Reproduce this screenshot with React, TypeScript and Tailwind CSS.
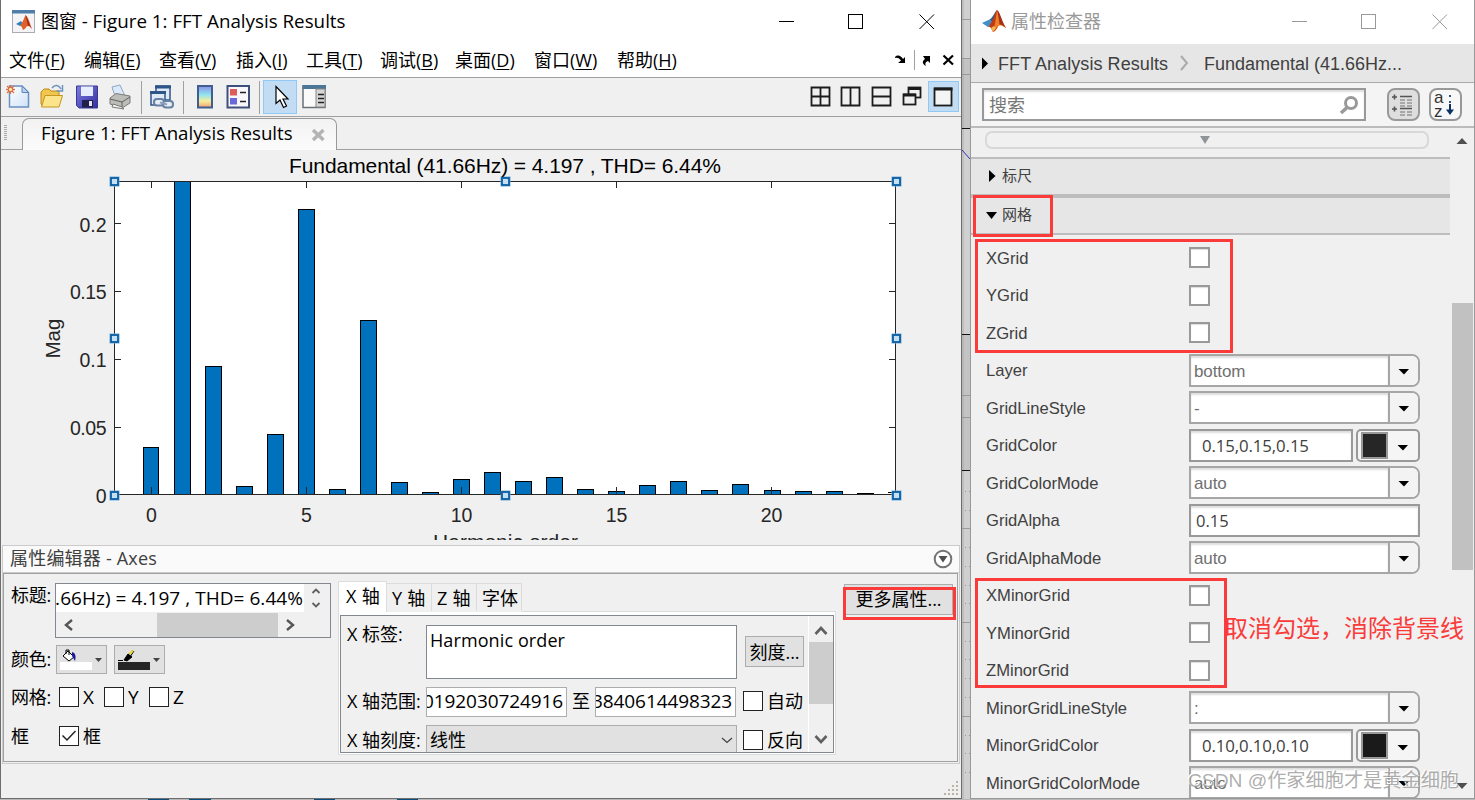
import React from 'react';

const bars = [
  [0, 447], [1, 181], [2, 366], [3, 486], [4, 434], [5, 209], [6, 489], [7, 320], [8, 482],
  [9, 492], [10, 479], [11, 472], [12, 481], [13, 477], [14, 489], [15, 491], [16, 485],
  [17, 481], [18, 490], [19, 484], [20, 490], [21, 491], [22, 491], [23, 493],
];

const menus = [
  { label: '文件', key: 'F', width: 'w-[75px]' },
  { label: '编辑', key: 'E', width: 'w-[75px]' },
  { label: '查看', key: 'V', width: 'w-[77px]' },
  { label: '插入', key: 'I', width: 'w-[70px]' },
  { label: '工具', key: 'T', width: 'w-[74px]' },
  { label: '调试', key: 'B', width: 'w-[75px]' },
  { label: '桌面', key: 'D', width: 'w-[79px]' },
  { label: '窗口', key: 'W', width: 'w-[83px]' },
  { label: '帮助', key: 'H', width: 'w-[70px]' },
];

const properties = [
  { name: 'XGrid', kind: 'check' },
  { name: 'YGrid', kind: 'check' },
  { name: 'ZGrid', kind: 'check' },
  { name: 'Layer', kind: 'select', value: 'bottom' },
  { name: 'GridLineStyle', kind: 'select', value: '-' },
  { name: 'GridColor', kind: 'color', value: '0.15,0.15,0.15' },
  { name: 'GridColorMode', kind: 'select', value: 'auto' },
  { name: 'GridAlpha', kind: 'text', value: '0.15' },
  { name: 'GridAlphaMode', kind: 'select', value: 'auto' },
  { name: 'XMinorGrid', kind: 'check' },
  { name: 'YMinorGrid', kind: 'check' },
  { name: 'ZMinorGrid', kind: 'check' },
  { name: 'MinorGridLineStyle', kind: 'select', value: ':' },
  { name: 'MinorGridColor', kind: 'color', value: '0.10,0.10,0.10' },
  { name: 'MinorGridColorMode', kind: 'select', value: 'auto' },
];

const MatlabLogo = () => (
  <svg width="24" height="24" viewBox="0 0 24 24" className="block shrink-0">
    <path d="M0 14 L7.500 10.500 L11 14 L6 18 Z" fill="#3f8fc9" />
    <path d="M7.500 10.500 C10 10 12 4 15 1 L11 14 Z" fill="#2b5f86" />
    <path d="M15 1 C12 5 12 11 6 18 C9 17 9.500 21 11 23 C15 22 16 16 18 15 Z" fill="#c03a16" />
    <path d="M15 1 C18 3 20 13 24 19 C20 16 17 14 11 23 C13 17 14 8 15 1 Z" fill="#ee8128" />
    <path d="M15 1 C18 3 20 13 24 19 C20 16 19 15 17.500 15.500 C17 10 16 5 15 1 Z" fill="#a5301a" />
    <path d="M9 19 L12 17 L14 19 L11 23 Z" fill="#f6b64f" />
  </svg>
);

const WindowButtons = ({ color }: { color: string }) => (
  <svg width="156" height="16" fill="none" stroke={color} className="block shrink-0">
    <path d="M0 7.500 H15" shapeRendering="crispEdges" />
    <rect x="69.500" y="0.500" width="14" height="14" shapeRendering="crispEdges" />
    <path d="M140.500 0.500 L155 15 M155 0.500 L140.500 15" />
  </svg>
);

const Caret = () => (
  <svg width="12" height="7" className="block">
    <path d="M0.500 1 H11 L6 6.500 Z" fill="#000" />
  </svg>
);

const Check = ({ checked = false }: { checked?: boolean }) => (
  <span className="flex h-5 w-5 shrink-0 items-center justify-center border border-[#222] bg-white">
    {checked && (
      <svg width="16" height="14" fill="none" stroke="#222" strokeWidth="1.5">
        <path d="M1.500 6.500 L6 11 L14.500 2" />
      </svg>
    )}
  </span>
);

const TitleBar = () => (
  <div className="flex h-[44px] items-center bg-white pl-[11px]">
    <svg width="24" height="24" className="block shrink-0">
      <rect x="0.500" y="0.500" width="22" height="22" fill="#f4f4f6" stroke="#a9adb3" />
      <rect x="0" y="0" width="23" height="3.500" fill="#4f7fa8" />
      <path d="M4 14 L9 11 L11 14 L8 16 Z" fill="#2f7fc0" />
      <path d="M13.500 5 C12 8 11 12 8 16 C10 16 10 18 11 20 C14 19 14 16 16 16 C18 16 19 18 20 19 C18 14 17 8 13.500 5 Z" fill="#e0612a" />
      <path d="M13.500 5 C16 8 17 14 20 19 C18 16 17 15 16 16 Z" fill="#9d2b18" />
    </svg>
    <span className="ml-[5px] w-[738px] pb-[2px] text-[18px] leading-6 whitespace-nowrap">
      图窗 <span className="text-[18.800px]">- Figure 1: FFT Analysis Results</span>
    </span>
    <WindowButtons color="#000" />
  </div>
);

const MenuBar = () => (
  <div className="flex h-[34px] items-center border-b border-[#a0a0a0] bg-white pb-[2px] pl-[8px] text-[18px] leading-6">
    {menus.map(menu => (
      <span key={menu.key} className={`${menu.width} shrink-0 whitespace-nowrap`}>
        {menu.label}(<span className="underline decoration-1 underline-offset-2">{menu.key}</span>)
      </span>
    ))}
    <svg width="64" height="22" className="mt-px ml-[205px] block shrink-0">
      <path d="M3 8 C6 5 9 7 11 10 L13 8 V14 H6 L9 11.500 C7 9 5 8.500 3 9 Z" fill="#000" />
      <path d="M22.500 1 V21" stroke="#a0a0a0" />
      <path d="M31 7 H38 V14 L36 12 C33 13 33 15 34 17 C30 15 30 12 33 10 Z" fill="#000" />
      <path d="M51.500 6.500 L61 15.500 M61 6.500 L51.500 15.500" stroke="#000" strokeWidth="2.2" />
    </svg>
  </div>
);

const Toolbar = () => (
  <div className="flex h-[39px] items-center border-b border-[#a0a0a0] bg-[#f0f0f0] pl-[5px]">
    <svg width="324" height="34" className="block shrink-0">
      <defs>
        <linearGradient id="page" x2="1" y2="1">
          <stop offset="0" stopColor="#fff" />
          <stop offset="1" stopColor="#cfe2f8" />
        </linearGradient>
        <linearGradient id="jet" x2="0" y2="1">
          <stop offset="0" stopColor="#8c8ee8" />
          <stop offset="0.4" stopColor="#8fe3ef" />
          <stop offset="0.7" stopColor="#f7ee9a" />
          <stop offset="1" stopColor="#f0a070" />
        </linearGradient>
        <linearGradient id="disk" x2="1" y2="1">
          <stop offset="0" stopColor="#7d7de0" />
          <stop offset="1" stopColor="#3430a0" />
        </linearGradient>
      </defs>
      {/* new */}
      <path d="M3.500 6 H16 L22.500 12.500 V27 H3.500 Z" fill="url(#page)" stroke="#6a8fc4" strokeWidth="1.5" />
      <path d="M16 6 V12.500 H22.500 Z" fill="#b9d2ef" stroke="#5f86bd" />
      <path d="M1 6 L8 13 M8 6 L1 13 M4.500 5 V14 M0 9.500 H9" stroke="#e07048" strokeWidth="1.300" />
      <circle cx="4.500" cy="9.500" r="2.200" fill="#ffe6a8" stroke="#d85c30" />
      {/* open */}
      <path d="M35 12 L38 9 H43 L45 11 H53 V26 H37 L35 24 Z" fill="#f0c650" stroke="#c08a14" />
      <path d="M35.500 27 L39 15.500 H56.500 L53 27 Z" fill="#fbe489" stroke="#c7961c" />
      <path d="M46 8 C49 4 53 5 55 9 M56.500 5 V11 H50.500" fill="none" stroke="#6d91bd" strokeWidth="1.500" />
      {/* save */}
      <path d="M70.500 6 H91.500 V28 H73 L70.500 25.500 Z" fill="url(#disk)" stroke="#3b3794" />
      <rect x="75" y="6.500" width="12" height="9.500" fill="#e6edfc" />
      <rect x="76" y="20" width="11" height="7.500" fill="#20204c" />
      <rect x="83" y="21" width="3" height="5" fill="#e6e6f2" />
      {/* print */}
      <path d="M106 7 L114 5 L119 16 L110 19 Z" fill="#dbe9fa" stroke="#8ea5c2" />
      <path d="M104 18 L110 13.500 L124 16 V23 L116 28 L104 24 Z" fill="#bcbcb8" stroke="#7c7c78" />
      <path d="M104 19 L116 22 L124 17 M116 22 V27" stroke="#60605c" fill="none" />
      <path d="M107 24 L116 27 L118 29 L106 27 Z" fill="#f5f5f5" stroke="#777" />
      <path d="M135.500 1 V34 M177.500 1 V34 M253.500 1 V34" stroke="#a0a0a0" />
      {/* link plot */}
      <rect x="150" y="6" width="14" height="14" fill="#dfe9f5" stroke="#2f5488" strokeWidth="1.500" />
      <path d="M149 7 H165" stroke="#2f5488" strokeWidth="3" />
      <rect x="145" y="12" width="14" height="13" fill="#dfe9f5" stroke="#2f5488" strokeWidth="1.500" />
      <path d="M144 12.500 H160" stroke="#2f5488" strokeWidth="3" />
      <rect x="148" y="19" width="10" height="6.500" rx="3" fill="#e8eef5" stroke="#6580a3" strokeWidth="2" />
      <rect x="157" y="21" width="10" height="6.500" rx="3" fill="#e8eef5" stroke="#6580a3" strokeWidth="2" />
      <path d="M154 22.500 L161 24.500" stroke="#8ca1bd" strokeWidth="2" />
      {/* colorbar */}
      <rect x="192" y="6" width="14" height="21.500" fill="url(#jet)" stroke="#3f5f91" strokeWidth="2" />
      {/* legend */}
      <rect x="221.500" y="6" width="21.500" height="21.500" fill="#f8f8fc" stroke="#40507c" strokeWidth="2" />
      <rect x="224" y="9" width="7" height="6.500" fill="#de5c5c" />
      <rect x="224" y="18" width="7" height="6.500" fill="#6b68dc" />
      <path d="M234 12.500 H240 M234 21.500 H240" stroke="#222" strokeWidth="1.500" />
      {/* edit plot, pressed */}
      <rect x="257.500" y="0.500" width="33" height="33" fill="#c2dcf3" stroke="#90c8f6" />
      <path d="M270 6.500 V23.500 L274 20 L277.500 27.500 L280.500 26 L277 19 H282 Z" fill="#fff" stroke="#000" strokeWidth="1.200" />
      {/* property inspector */}
      <rect x="297" y="6" width="22" height="21.500" fill="#fafafa" stroke="#6b7075" strokeWidth="1.500" />
      <rect x="296.500" y="5" width="23.500" height="4" fill="#4c7695" />
      <rect x="310" y="9" width="9" height="18" fill="#d6d6d6" stroke="#858585" />
      <path d="M312 14.500 H318 M312 18.500 H318 M312 22.500 H318" stroke="#222" strokeWidth="1.500" />
    </svg>
    <svg width="150" height="32" fill="none" stroke="#1c1c1c" strokeWidth="1.800" className="ml-[479px] block shrink-0">
      <path d="M2.500 6.500 H20.500 V24.500 H2.500 Z M11.500 6.500 V24.500 M2.500 15.500 H20.500" />
      <path d="M32.500 6.500 H50.500 V24.500 H32.500 Z M41.500 6.500 V24.500" />
      <path d="M63.500 6.500 H81.500 V24.500 H63.500 Z M63.500 15.500 H81.500" />
      <rect x="99.500" y="6.500" width="12" height="10" />
      <path d="M99 7.500 H112" strokeWidth="3" />
      <rect x="94.500" y="13.500" width="12" height="10" fill="#f0f0f0" />
      <path d="M94 14 H107" strokeWidth="3" />
      <rect x="119.500" y="0.500" width="30" height="30" fill="#c2dcf3" stroke="#90c8f6" strokeWidth="1" />
      <rect x="125.500" y="7.500" width="17" height="17" fill="#f4f4f4" />
      <path d="M125 8 H143.500" strokeWidth="3" />
    </svg>
  </div>
);

const TabStrip = () => (
  <div className="flex h-[33px] bg-[#f0f0f0]">
    <div className="flex w-[21px] items-center border-b border-[#a0a0a0] pl-[3px]">
      <div className="h-4 w-[3px] bg-[repeating-linear-gradient(#aaa_0_1px,#f0f0f0_1px_2px)]" />
    </div>
    <div className="mt-px flex w-[315px] items-center rounded-t-[7px] border border-b-0 border-[#999] bg-linear-to-b from-[#f2f2f2] to-[#fcfcfc] pb-[3px] pl-[18px]">
      <span className="w-[270px] text-[18.700px] leading-6 whitespace-nowrap">Figure 1: FFT Analysis Results</span>
      <svg width="15" height="14" className="mt-[3px] block">
        <path d="M2 2 L12.500 12 M12.500 2 L2 12" stroke="#b4b4b4" strokeWidth="3.500" />
      </svg>
    </div>
    <div className="flex-1 border-b border-[#a0a0a0]" />
  </div>
);

const Handle = ({ x, y }: { x: number; y: number }) => (
  <g>
    <rect x={x - 5} y={y - 5} width="10" height="10" fill="#75abd3" />
    <rect x={x - 3.5} y={y - 3.5} width="7" height="7" fill="#c5dff3" stroke="#0a5ea6" strokeWidth="1.800" />
  </g>
);

const FftChart = () => (
  <svg width="960" height="395" viewBox="1 150 960 395" className="block" fontFamily="Liberation Sans, Arial, sans-serif">
    <rect x="1" y="150" width="960" height="395" fill="#f0f0f0" />
    <g shapeRendering="crispEdges">
      <rect x="114" y="181" width="782" height="314" fill="#fff" />
      {bars.map(([order, top]) => (
        <rect
          key={order}
          x={Math.floor(143.4 + order * 31.03) + 0.5}
          y={top + 0.5}
          width={order === 0 ? 15 : 16}
          height={494 - top}
          fill="#0072bd"
          stroke="#000"
        />
      ))}
      <path d="M888 492.500 H896" stroke="#000" />
      <rect x="114.500" y="181.500" width="781" height="313" fill="none" stroke="#262626" />
      {[151, 306, 461, 616, 771].map(x => (
        <path key={x} d={`M${x}.5 494 V487 M${x}.5 181 V188`} stroke="#262626" />
      ))}
      {[223, 291, 359, 427].map(y => (
        <path key={y} d={`M114 ${y}.5 H121 M896 ${y}.5 H889`} stroke="#262626" />
      ))}
    </g>
    {[[114, 181], [505, 181], [896, 181], [114, 338], [896, 338], [114, 495], [505, 495], [896, 495]].map(([x, y]) => (
      <Handle key={`${x}-${y}`} x={x + 0.5} y={y + 0.5} />
    ))}
    <text x="289" y="173" fontSize="21" textLength="432" lengthAdjust="spacing" fill="#000">
      Fundamental (41.66Hz) = 4.197 , THD= 6.44%
    </text>
    <g fontSize="19.500" fill="#262626" textAnchor="end">
      <text x="106.500" y="232">0.2</text>
      <text x="106.500" y="299" textLength="36.500">0.15</text>
      <text x="106.500" y="367">0.1</text>
      <text x="106.500" y="435" textLength="36.500">0.05</text>
      <text x="106.500" y="503">0</text>
    </g>
    <g fontSize="19.500" fill="#262626" textAnchor="middle">
      <text x="151.500" y="522">0</text>
      <text x="306.500" y="522">5</text>
      <text x="461.500" y="522">10</text>
      <text x="616.500" y="522">15</text>
      <text x="771.500" y="522">20</text>
    </g>
    <text transform="translate(60 358.500) rotate(-90)" fontSize="20.500" fill="#262626">Mag</text>
    <text x="433" y="549" fontSize="21" textLength="145" fill="#262626">Harmonic order</text>
    <rect x="1" y="540" width="960" height="5" fill="#f0f0f0" />
  </svg>
);

const Chevron = ({ d }: { d: string }) => (
  <svg width="14" height="14" viewBox="0 0 14 14" fill="none" stroke="#555" strokeWidth="2.4" className="block">
    <path d={d} />
  </svg>
);

const StyleFields = () => (
  <div className="w-[330px] shrink-0 pt-[8px] pl-[7px] text-[18px] leading-6">
    <div className="flex h-[62px]">
      <span className="w-[44px] pt-[1px] whitespace-nowrap tracking-[-0.3px]">标题:</span>
      <div className="mt-[1px] h-[55px] w-[276px] border border-[#828790]">
        <div className="flex h-[28px] bg-[#f0f0f0]">
          <div className="flex w-[248px] justify-end overflow-hidden bg-white whitespace-nowrap">
            <span className="shrink-0 pt-[2px] pr-[1px] text-[19px] tracking-[0.05px]">.66Hz) = 4.197 , THD= 6.44%</span>
          </div>
          <svg width="26" height="28" fill="none" stroke="#606060" strokeWidth="1.800">
            <path d="M8.500 9 L12 5.500 L15.500 9 M8.500 19 L12 22.500 L15.500 19" />
          </svg>
        </div>
        <div className="flex h-[25px] items-center bg-[#f0f0f0] pl-[6px]">
          <Chevron d="M10 2 L4 7 L10 12" />
          <div className="ml-[81px] h-[24px] w-[121px] bg-[#cdcdcd]" />
          <div className="ml-[5px]">
            <Chevron d="M4 2 L10 7 L4 12" />
          </div>
        </div>
      </div>
    </div>
    <div className="flex h-[38px]">
      <span className="w-[45px] pt-[3px] whitespace-nowrap tracking-[-0.3px]">颜色:</span>
      <div className="mt-px flex h-[29px] w-[51px] border border-[#adadad] bg-[#e1e1e1]">
        <svg width="49" height="27">
          <rect x="3" y="16" width="32" height="8" fill="#fff" />
          <path d="M6 10 L11 5 L17 11 L12 15 Z" fill="#fff" stroke="#000" />
          <path d="M9 8 V4 H12 V9" fill="none" stroke="#000" />
          <path d="M15 6 C19 7 19 11 18 15 L15 10 Z" fill="#1b1b9b" />
          <path d="M38 12 H45 L41.500 16 Z" fill="#444" />
        </svg>
      </div>
      <div className="mt-px ml-[7px] flex h-[29px] w-[51px] border border-[#adadad] bg-[#e1e1e1]">
        <svg width="49" height="27">
          <rect x="3" y="16" width="32" height="8" fill="#262626" />
          <path d="M3 14.500 H8 M9 14 L13 8 L17 11 L12 15 Z" fill="#000" stroke="#000" />
          <path d="M13 9 L18 4 M15 11 L19 5" stroke="#000" />
          <path d="M14.500 8 L18 4.500" stroke="#e8d820" strokeWidth="2" />
          <path d="M38 12 H45 L41.500 16 Z" fill="#444" />
        </svg>
      </div>
    </div>
    <div className="flex h-[39px] items-start pt-[3px]">
      <span className="w-[48px] whitespace-nowrap tracking-[-0.3px]">网格:</span>
      <div className="flex items-center">
        <Check />
        <span className="w-[25px] pl-[4px] text-[19px]">X</span>
        <Check />
        <span className="w-[25px] pl-[4px] text-[19px]">Y</span>
        <Check />
        <span className="pl-[4px] text-[19px]">Z</span>
      </div>
    </div>
    <div className="flex items-center pt-[3px]">
      <span className="w-[48px]">框</span>
      <Check checked />
      <span className="pl-[4px]">框</span>
    </div>
  </div>
);

const AxisTabs = () => (
  <div className="w-[498px] shrink-0 pt-[7px]">
    <div className="flex h-[31px] items-end text-[18px] leading-6 whitespace-nowrap">
      <div className="h-[31px] w-[49px] border border-b-0 border-[#dcdcdc] bg-white pt-[2px] pl-[7px] tracking-[0.3px]">X 轴</div>
      <div className="mb-px h-[28px] w-[45px] border-t border-r border-[#dcdcdc] pt-[2px] pl-[5px] tracking-[0.3px]">Y 轴</div>
      <div className="mb-px h-[28px] w-[45px] border-t border-r border-[#dcdcdc] pt-[2px] pl-[5px] tracking-[0.3px]">Z 轴</div>
      <div className="mb-px h-[28px] w-[45px] border-t border-r border-[#dcdcdc] pt-[2px] pl-[5px]">字体</div>
      <div className="flex-1 border-b border-[#dcdcdc]" />
    </div>
    <div className="h-[143px] border border-t-0 border-[#dcdcdc] bg-white px-[1px] pt-[3px] pb-[2px]">
      <div className="flex h-[138px] overflow-hidden border border-[#828790] bg-[#f0f0f0] text-[18px] leading-6">
        <div className="w-[468px] pl-[6px]">
          <div className="flex h-[70px] pt-[9px]">
            <span className="-mt-[4px] w-[79px] whitespace-nowrap pt-px">X 标签:</span>
            <div className="h-[54px] w-[311px] border border-[#828790] bg-white pt-[2px] pl-[3px] tracking-[0.1px]">Harmonic order</div>
            <div className="mt-[11px] ml-[8px] flex h-[31px] w-[59px] items-center justify-center border border-[#adadad] bg-[#e1e1e1] whitespace-nowrap">
              刻度...
            </div>
          </div>
          <div className="flex h-[39px] pt-px">
            <span className="w-[79px] pt-[2px] whitespace-nowrap">X 轴范围:</span>
            <div className="flex h-[30px] w-[141px] justify-end overflow-hidden border border-[#adadad] bg-white pt-[1px] pr-[3px] text-[19px] tracking-[-0.1px]">
              <span className="shrink-0">0192030724916</span>
            </div>
            <span className="w-[28px] pt-[2px] pl-[5px]">至</span>
            <div className="flex h-[30px] w-[141px] justify-end overflow-hidden border border-[#adadad] bg-white pt-[1px] pr-[3px] text-[19px] tracking-[-0.1px]">
              <span className="shrink-0">3840614498323</span>
            </div>
            <div className="ml-[7px] flex h-[28px] items-center whitespace-nowrap">
              <Check />
              <span className="pl-[4px]">自动</span>
            </div>
          </div>
          <div className="flex h-[30px]">
            <span className="w-[79px] pt-[3px] whitespace-nowrap">X 轴刻度:</span>
            <div className="flex w-[311px] border border-b-0 border-[#adadad] bg-[#e1e1e1] pt-[2px] pl-[3px]">
              <span className="w-[291px]">线性</span>
              <svg width="12" height="22" fill="none" stroke="#444" strokeWidth="1.300">
                <path d="M1 10 L6 14.500 L11 10" />
              </svg>
            </div>
            <div className="ml-[6px] flex items-center whitespace-nowrap">
              <Check />
              <span className="pl-[4px]">反向</span>
            </div>
          </div>
        </div>
        <div className="flex w-[25px] flex-col items-center border-l border-white">
          <svg width="24" height="26" fill="none" stroke="#606060" strokeWidth="2.600">
            <path d="M6.500 18 L12 12 L17.500 18" />
          </svg>
          <div className="h-[62px] w-[24px] bg-[#cdcdcd]" />
          <svg width="24" height="48" fill="none" stroke="#606060" strokeWidth="2.600" className="block">
            <path d="M6.500 32 L12 38 L17.500 32" />
          </svg>
        </div>
      </div>
    </div>
  </div>
);

const PropertyEditor = () => (
  <div className="ml-px h-[219px] w-[958px] border border-[#cbcbcb] bg-[#f0f0f0]">
    <div className="flex h-[27px] items-center border-b border-[#cbcbcb] bg-[#fafafa] pl-[7px] text-[#404040]">
      <span className="w-[923px] pb-[2px] text-[18px] leading-6 tracking-[0.2px]">属性编辑器 - Axes</span>
      <svg width="20" height="20" className="block">
        <circle cx="10" cy="10" r="8.300" fill="#fff" stroke="#747474" strokeWidth="2" />
        <path d="M5.500 7 H14.500 L10 13.500 Z" fill="#505050" />
      </svg>
    </div>
    <div className="flex h-[189px] w-[955px] border border-[#a0a0a0]">
      <StyleFields />
      <div className="pl-[4px]">
        <AxisTabs />
      </div>
      <div className="relative mt-[10px] ml-[8px] flex h-[31px] w-[109px] items-center justify-center border border-[#adadad] bg-[#e1e1e1] text-[18px] whitespace-nowrap">
        更多属性...
        <div className="absolute top-[2px] -left-[2px] h-[33px] w-[113px] border-[3px] border-[#fb3a3a]" />
      </div>
    </div>
  </div>
);

const FigureWindow = () => (
  <div className="flex h-[799px] w-[962px] shrink-0 flex-col border-r border-b border-l border-[#6d6d6d] bg-[#f0f0f0] text-black">
    <TitleBar />
    <MenuBar />
    <Toolbar />
    <TabStrip />
    <FftChart />
    <PropertyEditor />
    <div className="flex flex-1 items-end justify-end pr-[2px] pb-[2px]">
      <svg width="15" height="15" fill="#b8b5a4">
        {[[12, 0], [8, 4], [12, 4], [4, 8], [8, 8], [12, 8], [0, 12], [4, 12], [8, 12], [12, 12]].map(([x, y]) => (
          <rect key={`${x}-${y}`} x={x} y={y} width="2" height="2" />
        ))}
      </svg>
    </div>
  </div>
);

const PropertyValue = ({ kind, value }: { kind: string; value?: string }) => {
  if (kind === 'check') {
    return <div className="h-[21px] w-[21px] border-2 border-[#999] bg-white shadow-[inset_0_1px_1px_#ddd]" />;
  }
  if (kind === 'text') {
    return (
      <div className="flex h-[33px] w-[231px] items-center border-2 border-[#999] bg-white pt-[2px] pl-[5px] font-['Open_Sans',sans-serif] text-[16.500px] text-[#404040] shadow-[inset_0_2px_2px_#ddd]">
        {value}
      </div>
    );
  }
  if (kind === 'color') {
    return (
      <div className="flex gap-[3px]">
        <div className="flex h-[33px] w-[164px] items-center border-2 border-[#999] bg-white pt-px pl-[11px] font-['Open_Sans',sans-serif] text-[16.800px] tracking-[-0.1px] text-[#404040] shadow-[inset_0_2px_2px_#ddd]">
          {value}
        </div>
        <div className="flex h-[33px] w-[64px] items-center rounded-[5px] border-2 border-[#999] bg-[#f5f5f5] pl-[3px]">
          <div className={`h-[27px] w-[27px] border-2 border-[#999] ${value === '0.15,0.15,0.15' ? 'bg-[#262626]' : 'bg-[#1a1a1a]'}`} />
          <div className="pt-[4px] pl-[9px]">
            <Caret />
          </div>
        </div>
      </div>
    );
  }
  return (
    <div className="flex h-[33px] w-[231px] overflow-hidden rounded-r-[8px] border-2 border-[#a6a6a6] bg-white">
      <div className="flex w-[197px] items-center pt-[2px] pl-[3px] text-[17px] tracking-[-0.1px] text-[#707070] shadow-[inset_0_2px_2px_#ddd]">
        {value}
      </div>
      <div className="flex flex-1 items-center justify-center border-l-2 border-[#a6a6a6] bg-[#f3f3f3] pt-[2px]">
        <Caret />
      </div>
    </div>
  );
};

const Inspector = () => (
  <div className="relative flex h-[799px] w-[505px] shrink-0 flex-col overflow-hidden border-r border-b border-l border-[#999] bg-[#f0f0f0] font-['Liberation_Sans','Noto_Sans_CJK_SC',sans-serif] text-[#404040]">
    <div className="flex h-[44px] shrink-0 items-center bg-white pl-[11px]">
      <div className="-mt-[3px]">
        <MatlabLogo />
      </div>
      <span className="ml-[5px] w-[281px] text-[18px] text-[#999]">属性检查器</span>
      <WindowButtons color="#999" />
    </div>
    <div className="flex h-[39px] shrink-0 items-center border-b border-[#aaa] bg-[#e6e6e6] pl-[11px] text-[18px] whitespace-nowrap">
      <svg width="16" height="14">
        <path d="M0 1.500 L6 7.500 L0 13.500 Z" fill="#000" />
      </svg>
      <span className="w-[181px] pt-[2px] tracking-[0.07px]">FFT Analysis Results</span>
      <svg width="25" height="18" fill="none" stroke="#aaa" strokeWidth="2">
        <path d="M2 2 L8 9 L2 16" />
      </svg>
      <span className="pt-[2px]">Fundamental (41.66Hz...</span>
    </div>
    <div className="flex h-[45px] shrink-0 items-center border-b-2 border-[#bbb] bg-[#f4f4f4] pl-[11px]">
      <div className="flex h-[33px] w-[384px] items-center border-2 border-[#999] bg-white pl-[5px] text-[18px] text-[#777] shadow-[inset_0_2px_2px_#ddd]">
        <span className="w-[350px] pt-[3px]">搜索</span>
        <svg width="20" height="20" fill="none" stroke="#999">
          <circle cx="12" cy="8" r="5.500" strokeWidth="3" />
          <path d="M8 12.500 L2 18" strokeWidth="3.500" />
        </svg>
      </div>
      <div className="ml-[21px] h-[33px] w-[33px] rounded-[8px] border-2 border-[#999] bg-[#dedede]">
        <svg width="29" height="29" stroke="#555">
          <path d="M3 7 H8 M5.500 4.500 V9.500 M3 19 H8 M5.500 16.500 V21.500" strokeWidth="1.600" />
          <path d="M11 6.500 H23 M11 18.500 H23" strokeWidth="1.600" />
          <path
            d="M11 10 H16 M18 10 H23 M11 13 H16 M18 13 H23 M11 16 H16 M18 16 H23 M11 22 H16 M18 22 H23 M11 25 H16 M18 25 H23"
            stroke="#a8a8a8"
            strokeWidth="1.800"
          />
        </svg>
      </div>
      <div className="ml-[9px] h-[33px] w-[33px] rounded-[8px] border-2 border-[#999] bg-[#f8f8f8]">
        <svg width="29" height="29" fontSize="17" fill="#333" fontFamily="Liberation Sans, sans-serif">
          <text x="3" y="12.500">a</text>
          <text x="3" y="27">z</text>
          <path d="M19 5 V13" stroke="#33527c" strokeWidth="2" strokeDasharray="2 4" />
          <path d="M19 14 V22" stroke="#0d3363" strokeWidth="2" />
          <path d="M15 19.500 H23 L19 25 Z" fill="#0d3363" />
        </svg>
      </div>
    </div>
    <div className="flex min-h-0 flex-1">
      <div className="w-[479px] shrink-0 overflow-hidden">
        <div className="h-[29px] pt-[3px] pl-[14px]">
          <div className="flex h-[18px] w-[444px] justify-center rounded-[7px] border-2 border-[#d8d8d8] pt-[3px] pr-[4px]">
            <svg width="10" height="8">
              <path d="M0 0 H10 L5 8 Z" fill="#8f9498" />
            </svg>
          </div>
        </div>
        <div className="flex h-[37px] items-center border-t-2 border-[#bdbdbd] bg-[#e6e6e6] pb-px pl-[18px] text-[15px]">
          <svg width="13" height="12">
            <path d="M0 0 L6.500 6 L0 12 Z" fill="#000" />
          </svg>
          标尺
        </div>
        <div className="flex h-[41px] items-center border-t-4 border-b-2 border-[#bdbdbd] bg-[#e6e6e6] pb-px pl-[15px] text-[15px]">
          <svg width="16" height="7">
            <path d="M0 0 H11 L5.500 7 Z" fill="#000" />
          </svg>
          网格
        </div>
        <div className="pt-[4px]">
          {properties.map(({ name, kind, value }) => (
            <div key={name} className="flex h-[37.500px] items-center pl-[15px] whitespace-nowrap">
              <span className="w-[203px] pt-[3px] text-[16.600px]">{name}</span>
              <PropertyValue kind={kind} value={value} />
            </div>
          ))}
        </div>
      </div>
      <div className="flex flex-1 flex-col items-center">
        <svg width="12" height="175" className="block shrink-0">
          <path d="M0.500 16 L6 10 L11.500 16 Z" fill="#505050" />
        </svg>
        <div className="h-[267px] w-[21px] shrink-0 bg-[#c1c1c1]" />
        <svg width="12" height="228" className="block shrink-0">
          <path d="M0.500 213 H11.500 L6 219 Z" fill="#505050" />
        </svg>
      </div>
    </div>
    {/* highlight frames and note laid over the list */}
    <div className="absolute top-[195px] left-[2px] h-[42px] w-[80px] border-[3px] border-[#fb3a3a]" />
    <div className="absolute top-[239px] left-[4px] h-[114px] w-[258px] border-[3px] border-[#fb3a3a]" />
    <div className="absolute top-[578px] left-[4px] h-[110px] w-[252px] border-[3px] border-[#fb3a3a]" />
    <div className="absolute top-[611px] left-[253px] text-[24px] leading-9 whitespace-nowrap text-[#fb3a3a]">
      取消勾选，消除背景线
    </div>
    <div className="absolute top-[765px] left-[217px] text-[19.200px] leading-8 whitespace-nowrap text-[#999]/80 [text-shadow:-1px_-1px_0_#fff]">
      CSDN @作家细胞才是黄金细胞
    </div>
  </div>
);

const Desktop = () => (
  <svg width="8" height="800" viewBox="962 0 8 800" className="block shrink-0" shapeRendering="crispEdges">
    <rect x="962" y="0" width="8" height="470" fill="#c3c3c3" />
    <rect x="962" y="0" width="8" height="58" fill="#d0d0d0" />
    <rect x="962" y="128" width="8" height="206" fill="#d0d0d0" />
    <rect x="962" y="470" width="8" height="330" fill="#cfcfcf" />
    <rect x="962" y="0" width="2" height="800" fill="#999" fillOpacity="0.3" />
    {[19, 58, 74, 395, 417, 528, 622, 716].map(y => (
      <path key={y} d={`M962 ${y}.5 H970`} stroke="#9a9a9a" />
    ))}
    {[547, 566, 585, 603, 641, 659, 678, 697, 735, 753, 772, 491, 510].map(y => (
      <path key={y} d={`M965 ${y}.5 H970`} stroke="#999" strokeDasharray="1 3" />
    ))}
    {[128, 334, 470].map(y => (
      <path key={y} d={`M962 ${y}.5 H970`} stroke="#111" />
    ))}
    <path d="M962 150 L970 159" stroke="#3030b8" shapeRendering="auto" />
  </svg>
);

const App: React.FC = () => {
  return (
    <div className="h-[800px] w-[1475px] overflow-hidden bg-[#b8b8b8] font-['Open_Sans','Noto_Sans_CJK_SC',sans-serif]">
      <div className="flex h-[799px] overflow-hidden">
        <FigureWindow />
        <Desktop />
        <Inspector />
      </div>
      <div className="flex h-px">
        <div className="ml-[148px] h-px w-[21px] bg-[#0a4e80]" />
        <div className="ml-[20px] h-px w-[22px] bg-[#0a4e80]" />
        <div className="ml-[103px] h-px w-[21px] bg-[#0a4e80]" />
        <div className="ml-[62px] h-px w-[21px] bg-[#0a4e80]" />
      </div>
    </div>
  );
};

export default App;
